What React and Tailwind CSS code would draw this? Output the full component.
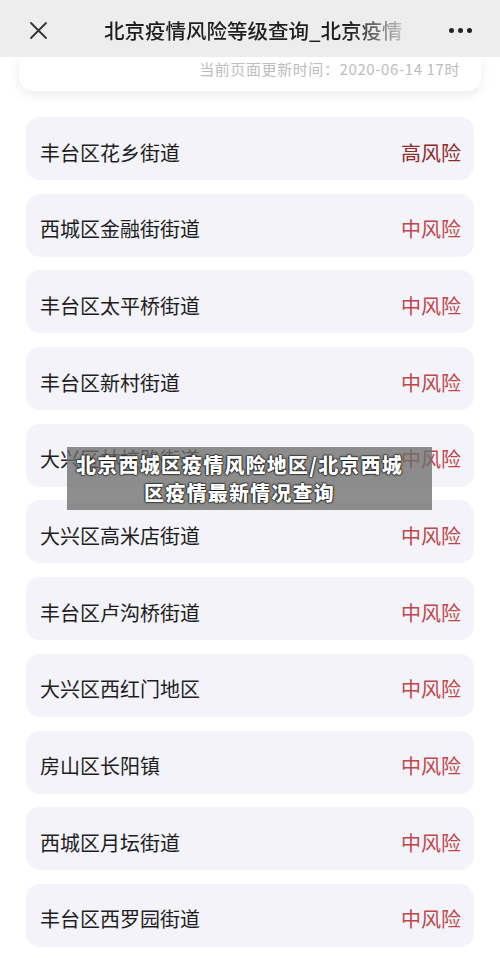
import React from 'react';

const rows = [
  { name: '丰台区花乡街道', level: '高风险' },
  { name: '西城区金融街街道', level: '中风险' },
  { name: '丰台区太平桥街道', level: '中风险' },
  { name: '丰台区新村街道', level: '中风险' },
  { name: '大兴区林校路街道', level: '中风险' },
  { name: '大兴区高米店街道', level: '中风险' },
  { name: '丰台区卢沟桥街道', level: '中风险' },
  { name: '大兴区西红门地区', level: '中风险' },
  { name: '房山区长阳镇', level: '中风险' },
  { name: '西城区月坛街道', level: '中风险' },
  { name: '丰台区西罗园街道', level: '中风险' },
];

const font = { fontFamily: '"Noto Sans CJK SC", "Noto Sans", sans-serif' };

export default function App() {
  return (
    <div className="relative w-[500px] h-[958px] overflow-hidden bg-white" style={font}>
      {/* Header */}
      <header className="relative z-10 h-[57px] bg-[#ededed] flex items-center">
        <div className="w-[104px] pl-[29px] pt-[4px] flex items-center">
          <svg width="19" height="19" viewBox="0 0 19 19" fill="none" stroke="#333" strokeWidth="1.8" strokeLinecap="round">
            <path d="M2 2 L17 17 M17 2 L2 17" />
          </svg>
        </div>
        <div className="w-[300px] overflow-hidden whitespace-nowrap pt-[3px]">
          <span className="text-[20.5px] font-medium bg-gradient-to-r from-[#1f1f1f] from-[82%] to-[#c8c8c8] bg-clip-text text-transparent">
            北京疫情风险等级查询_北京疫情
          </span>
        </div>
        <div className="flex-1 flex justify-end pr-[28px] pt-[4px] gap-[4px]">
          <span className="w-[5px] h-[5px] rounded-full bg-[#222]" />
          <span className="w-[5px] h-[5px] rounded-full bg-[#222]" />
          <span className="w-[5px] h-[5px] rounded-full bg-[#222]" />
        </div>
      </header>

      {/* Update time card */}
      <div className="mx-[19px] h-[34px] bg-white rounded-b-[14px] shadow-[0_4px_12px_rgba(0,0,0,0.08)] flex items-start justify-end pt-[1px] pr-[21px]">
        <span className="text-[15px] tracking-[0.6px] text-[#bdbdbd] leading-[22px]">当前页面更新时间：2020-06-14 17时</span>
      </div>

      {/* List */}
      <div className="mt-[26px] mx-[26px] flex flex-col gap-[13.7px]">
        {rows.map((r, i) => (
          <div key={i} className="h-[63px] rounded-[14px] bg-[#f3f3f9] flex items-center justify-between pt-[8px] pl-[14px] pr-[13px]">
            <span className="text-[20px] text-[#1e1e1e]">{r.name}</span>
            <span className={`text-[20px] ${r.level === '高风险' ? 'text-[#8e2a2e]' : 'text-[#c0464a]'}`}>{r.level}</span>
          </div>
        ))}
      </div>

      {/* Overlay caption */}
      <div className="absolute left-[67px] top-[447px] w-[365px] h-[63px] bg-[rgba(110,110,110,0.78)] flex items-center justify-center pr-[20px]">
        <p className="text-center text-white font-black text-[20px] leading-[28px] tracking-[1.2px] [text-shadow:0_0_2px_#000,0_0_2px_#000,0_0_1px_#000]">
          北京西城区疫情风险地区/北京西城<br />区疫情最新情况查询
        </p>
      </div>
    </div>
  );
}
